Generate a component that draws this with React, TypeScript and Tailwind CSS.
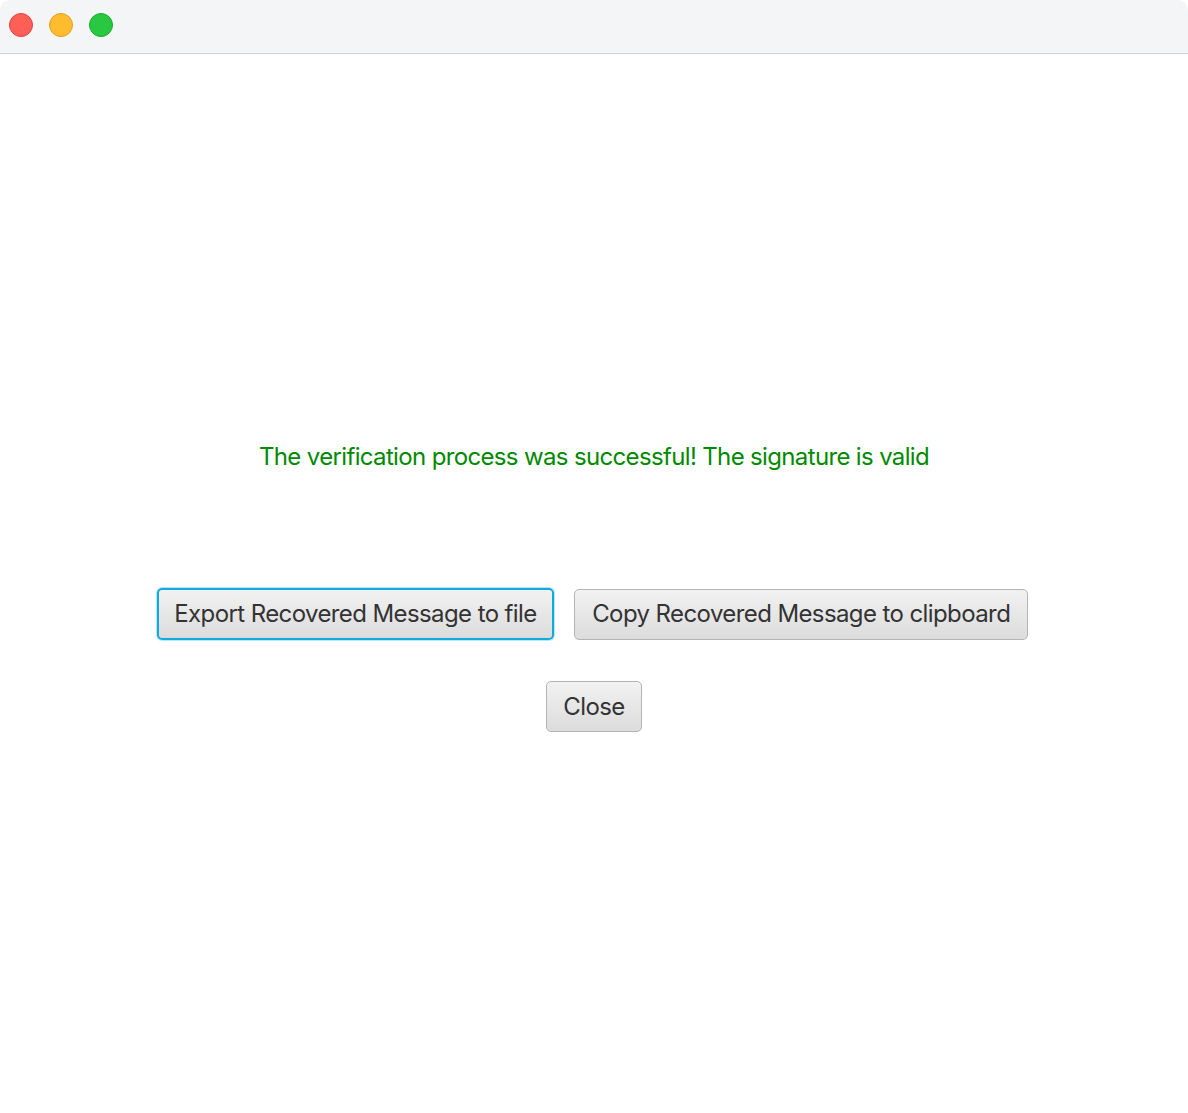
import React from "react";

export default function App() {
  return (
    <div className="w-[1188px] h-[1113px] bg-white flex flex-col overflow-hidden" style={{ fontFamily: "Inter, 'Noto Sans', sans-serif" }}>
      <div className="h-[54px] bg-[#f4f5f7] border-b border-[#d4d4d4] flex items-start pt-[13px] pl-[9px] gap-[16px] shrink-0 rounded-t-[10px]">
        <div className="w-[24px] h-[24px] rounded-full bg-[#fe5f57] border border-[#e0443e]" />
        <div className="w-[24px] h-[24px] rounded-full bg-[#febc2e] border border-[#dea123]" />
        <div className="w-[24px] h-[24px] rounded-full bg-[#28c840] border border-[#1aab29]" />
      </div>
      <div className="flex flex-col items-center">
        <div className="mt-[387px] text-[#008a00] text-[24px] leading-[32px] tracking-[-0.65px]">
          The verification process was successful! The signature is valid
        </div>
        <div className="mt-[115px] mr-[3px] flex gap-[20px] items-center">
          <button className="h-[52px] px-[15.5px] rounded-[5px] border-2 border-[#14a9dc] bg-gradient-to-b from-[#f2f2f2] to-[#dcdcdc] text-[#333] text-[24px] tracking-[-0.6px] shadow-[0_0_0_1px_#b8e6f6]">
            Export Recovered Message to file
          </button>
          <button className="h-[51px] px-[17px] rounded-[5px] border border-[#b4b4b4] bg-gradient-to-b from-[#f2f2f2] to-[#dcdcdc] text-[#333] text-[24px] tracking-[-0.6px]">
            Copy Recovered Message to clipboard
          </button>
        </div>
        <button className="mt-[41px] h-[51px] px-[16px] rounded-[5px] border border-[#b4b4b4] bg-gradient-to-b from-[#f2f2f2] to-[#dcdcdc] text-[#333] text-[24px] tracking-[-0.6px]">
          Close
        </button>
      </div>
    </div>
  );
}
